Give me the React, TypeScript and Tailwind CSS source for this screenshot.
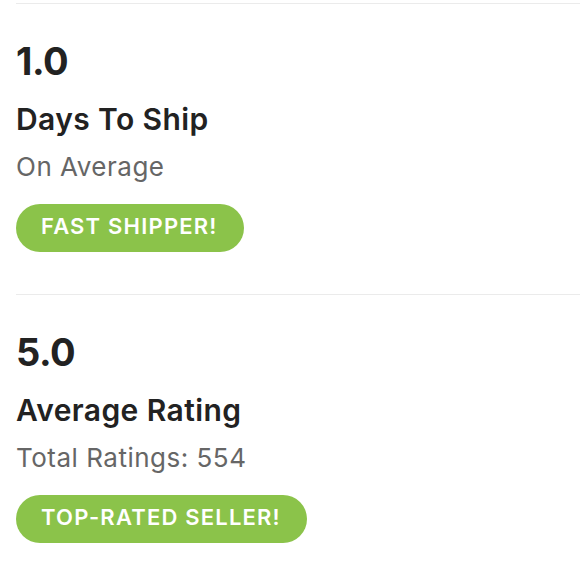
import React from "react";

function Stat({ value, title, sub, badge }: { value: string; title: string; sub: string; badge: string }) {
  return (
    <div className="flex flex-col items-start">
      <div className="text-[38px] leading-[44px] font-bold text-[#222] tracking-[-0.5px]">{value}</div>
      <div className="mt-[18px] text-[30px] leading-[36px] font-semibold text-[#222] tracking-[0.4px]">{title}</div>
      <div className="mt-[15px] text-[26px] leading-[30px] text-[#666] tracking-[0.5px]">{sub}</div>
      <div className="mt-[22px] h-[48px] rounded-full bg-[#8bc34a] pl-[25px] pr-[26px] pb-[4px] flex items-center text-white text-[22px] font-semibold tracking-[1.2px]">
        {badge}
      </div>
    </div>
  );
}

export default function App() {
  return (
    <div className="w-[580px] h-[580px] bg-white overflow-hidden pl-4" style={{ fontFamily: "Inter, 'Open Sans', sans-serif" }}>
      <div className="mt-[3px] h-px bg-[#ebebeb]" />
      <div className="pt-[35px] pb-[42px]">
        <Stat value="1.0" title="Days To Ship" sub="On Average" badge="FAST SHIPPER!" />
      </div>
      <div className="h-px bg-[#ebebeb]" />
      <div className="pt-[35px]">
        <Stat value="5.0" title="Average Rating" sub="Total Ratings: 554" badge="TOP-RATED SELLER!" />
      </div>
    </div>
  );
}
